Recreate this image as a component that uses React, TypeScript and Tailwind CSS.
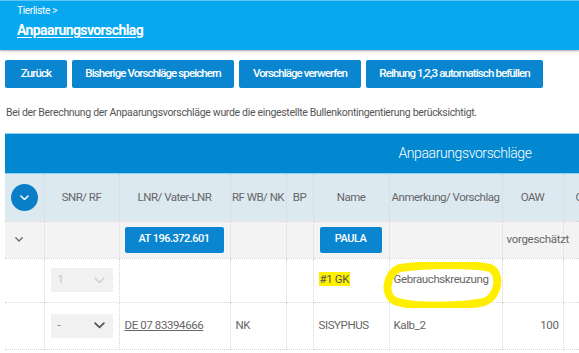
import React from "react";

const Chevron = ({ className = "", color = "#fff", w = 10, sw = 1.6 }: { className?: string; color?: string; w?: number; sw?: number }) => (
  <svg width={w} height={w * 0.6} viewBox="0 0 10 6" className={className}>
    <path d="M1 1 L5 5 L9 1" fill="none" stroke={color} strokeWidth={sw} strokeLinecap="round" strokeLinejoin="round" />
  </svg>
);

const cell = "border-r border-b border-dotted border-[#d6d6d6] align-middle";

export default function App() {
  return (
    <div className="w-[579px] h-[353px] overflow-hidden bg-white relative" style={{ fontFamily: "Roboto, 'Liberation Sans', sans-serif" }}>
      <div className="h-[50px] bg-[#07a8f0] border-t border-[#5cc6f5] shadow-[0_1px_2px_rgba(0,0,0,0.35)] pl-[17px] pt-[3px] text-white">
        <div className="text-[10px] leading-[14px] tracking-[-0.3px]">Tierliste &gt;</div>
        <div className="text-[14px] font-bold leading-[22px] tracking-[-0.6px] underline underline-offset-2 mt-[1px]">Anpaarungsvorschlag</div>
      </div>

      <div className="flex gap-[5px] pl-[5px] mt-[10px]">
        {[
          ["Zurück", "w-[62px]"],
          ["Bisherige Vorschläge speichern", "w-[162px]"],
          ["Vorschläge verwerfen", "w-[122px]"],
          ["Reihung 1,2,3 automatisch befüllen", "w-[177px]"],
        ].map(([t, w]) => (
          <div key={t} className={`${w} h-[28px] bg-[#0a86d0] rounded-[2px] flex items-center justify-center text-white text-[11.5px] font-medium tracking-[-0.9px]`}>
            {t}
          </div>
        ))}
      </div>

      <div className="pl-[6px] mt-[18px] text-[10.5px] leading-[14px] text-[#555] tracking-[-0.32px]">
        Bei der Berechnung der Anpaarungsvorschläge wurde die eingestellte Bullenkontingentierung berücksichtigt.
      </div>

      <div className="ml-[5px] mt-[13px] w-[920px]">
        <div className="h-[41px] bg-[#0288d1] border-t border-b border-[#8fd3f4] flex items-center justify-center text-white text-[14px] font-light tracking-[-0.4px]">
          Anpaarungsvorschläge
        </div>
        <table className="border-collapse table-fixed text-[11.5px] text-[#666] tracking-[-0.4px]" style={{ width: 920 }}>
          <colgroup>
            <col style={{ width: 39 }} />
            <col style={{ width: 75 }} />
            <col style={{ width: 111 }} />
            <col style={{ width: 56 }} />
            <col style={{ width: 27 }} />
            <col style={{ width: 76 }} />
            <col style={{ width: 113 }} />
            <col style={{ width: 61 }} />
            <col />
          </colgroup>
          <thead>
            <tr className="h-[47px] bg-[#dde9f1] text-[#666] tracking-[-0.5px]">
              <th className={`${cell} font-normal`}>
                <div className="w-[27px] h-[27px] rounded-full bg-[#0a7fc8] flex items-center justify-center mx-auto">
                  <Chevron w={9} />
                </div>
              </th>
              <th className={`${cell} font-normal`}>SNR/ RF</th>
              <th className={`${cell} font-normal`}>LNR/ Vater-LNR</th>
              <th className={`${cell} font-normal`}>RF WB/ NK</th>
              <th className={`${cell} font-normal`}>BP</th>
              <th className={`${cell} font-normal`}>Name</th>
              <th className={`${cell} font-normal`}>Anmerkung/ Vorschlag</th>
              <th className={`${cell} font-normal`}>OAW</th>
              <th className={`${cell} font-normal text-left pl-[12px]`}>OAW</th>
            </tr>
          </thead>
          <tbody>
            <tr className="h-[37px] bg-[#f3f3f3]">
              <td className={cell}>
                <div className="pl-[10px]"><Chevron color="#666" w={8} /></div>
              </td>
              <td className={cell}></td>
              <td className={cell}>
                <div className="ml-[5px] w-[99px] h-[26px] bg-[#0a86d0] rounded-[2px] flex items-center justify-center text-white text-[11px] font-medium tracking-[-0.5px]">AT 196.372.601</div>
              </td>
              <td className={cell}></td>
              <td className={cell}></td>
              <td className={cell}>
                <div className="ml-[6px] w-[62px] h-[26px] bg-[#0a86d0] rounded-[2px] flex items-center justify-center text-white text-[11px] font-medium tracking-[-0.5px]">PAULA</div>
              </td>
              <td className={cell}></td>
              <td className={`${cell} pl-[4px] tracking-[-0.3px]`}>vorgeschätzt</td>
              <td className={cell}></td>
            </tr>
            <tr className="h-[44px]">
              <td className={cell}></td>
              <td className={cell}>
                <div className="ml-[6px] w-[62px] h-[24px] bg-[#f1f1f1] flex items-center justify-between pl-[7px] pr-[8px] text-[#c4c4c4]">
                  <span>1</span>
                  <Chevron color="#c9c9c9" w={11} sw={1.2} />
                </div>
              </td>
              <td className={cell}></td>
              <td className={cell}></td>
              <td className={cell}></td>
              <td className={`${cell} pl-[5px]`}>
                <span className="bg-[#fff200] px-[1px] text-[#555]">#1 GK</span>
              </td>
              <td className={`${cell} pl-[4px]`}>Gebrauchskreuzung</td>
              <td className={cell}></td>
              <td className={cell}></td>
            </tr>
            <tr className="h-[47px]">
              <td className={cell}></td>
              <td className={cell}>
                <div className="ml-[6px] w-[62px] h-[24px] bg-[#f1f1f1] flex items-center justify-between pl-[7px] pr-[8px] text-[#777]">
                  <span>-</span>
                  <Chevron color="#555" w={11} />
                </div>
              </td>
              <td className={`${cell} pl-[5px]`}>
                <span className="underline">DE 07 83394666</span>
              </td>
              <td className={`${cell} pl-[5px]`}>NK</td>
              <td className={cell}></td>
              <td className={`${cell} pl-[5px]`}>SISYPHUS</td>
              <td className={`${cell} pl-[4px]`}>Kalb_2</td>
              <td className={`${cell} text-right pr-[4px]`}>100</td>
              <td className={cell}></td>
            </tr>
          </tbody>
        </table>
      </div>

      <svg className="absolute left-[380px] top-[262px] pointer-events-none" width="122" height="46" viewBox="0 0 122 46">
        <path
          d="M20 6 C 45 2, 95 2, 110 6 C 121 10, 120 34, 104 40 C 80 45, 30 45, 15 39 C 3 33, 6 11, 20 6 Z"
          fill="none"
          stroke="#ffee00"
          strokeWidth="8"
        />
      </svg>
    </div>
  );
}
